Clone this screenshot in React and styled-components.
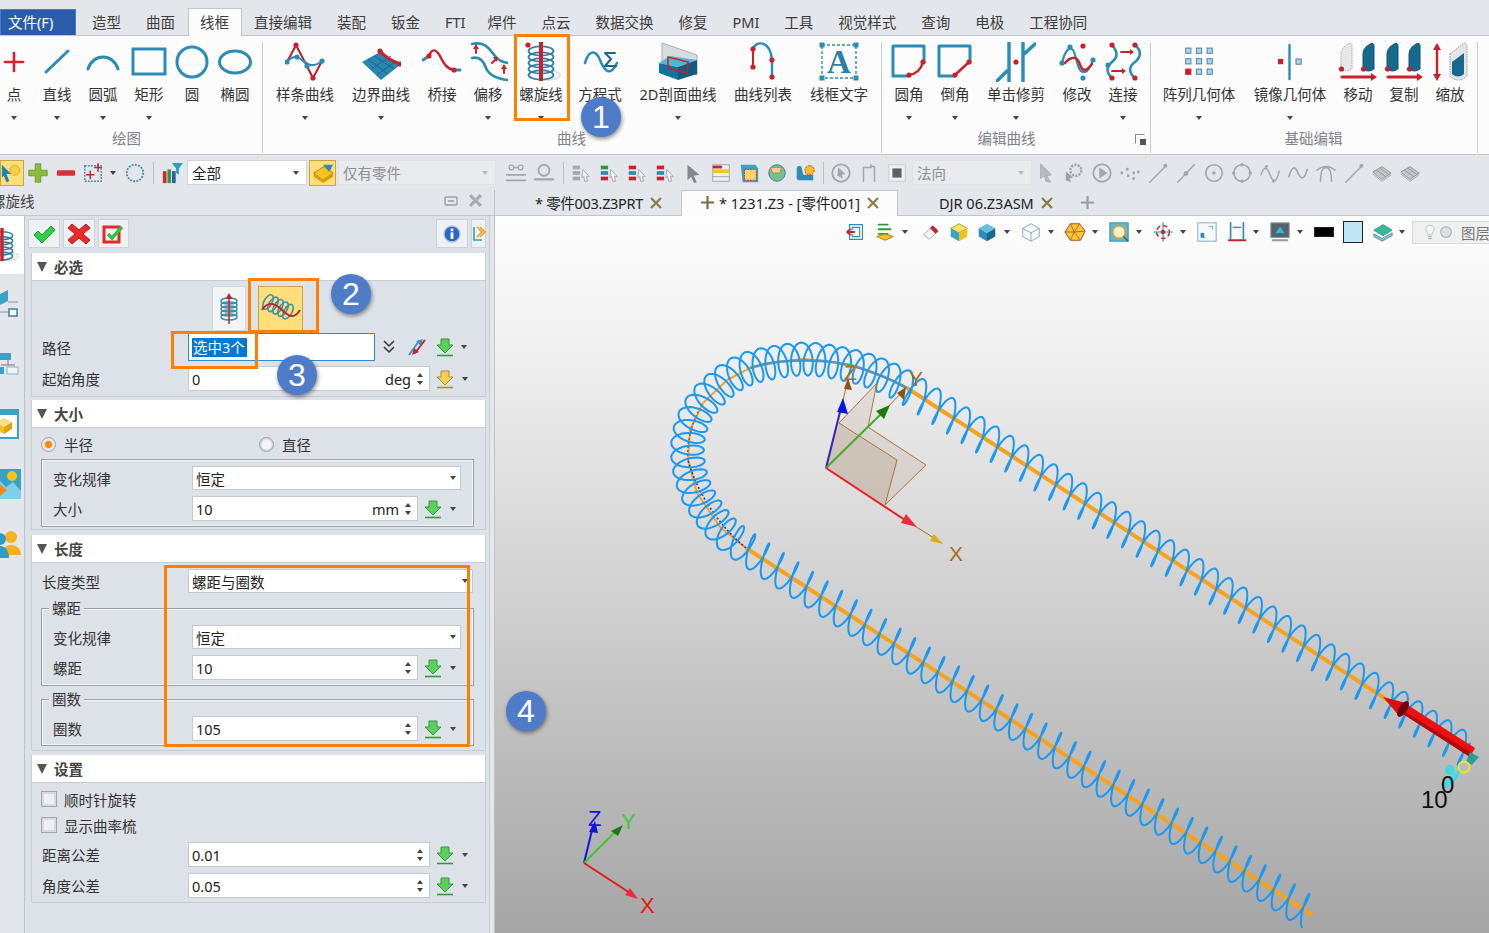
import React from 'react';
import styled, { createGlobalStyle } from 'styled-components';

const B = '#2b8db5';
const BD = '#17688e';
const R = '#c9202b';
const GR = '#a3a7ab';

const GlobalStyle = createGlobalStyle`
html, body { margin: 0; padding: 0; background: #e3e6ea; }
* { box-sizing: border-box; }
body { font-family: "Noto Sans", "Noto Sans CJK SC", sans-serif; font-size: 14.5px; color: #333; }
`

const Page = styled.div`
position: relative;
display: flex;
flex-direction: column;
width: 1489px;
height: 933px;
overflow: hidden;
background: #e3e6ea;
`

/* menu */
const MenuBar = styled.div`
display: flex;
align-items: flex-end;
height: 36px;
flex: none;
border-bottom: 1px solid #c2c6ca;
`
const FileButton = styled.div`
width: 76px;
height: 26px;
padding-left: 7px;
line-height: 25px;
color: #fff;
background: #2a5cab;
border: 1px solid #3f7fd0;
border-bottom: 0;
`
const MenuTab = styled.div`
height: 28px;
padding: 0 11.5px;
line-height: 26px;
white-space: nowrap;
margin-left: ${p => p.$first ? '3.5px' : '0'};
margin-right: ${p => p.$tight ? '-3px' : '0'};
color: #3c3c3c;
background: ${p => p.$active ? '#fcfcfc' : 'transparent'};
border: 1px solid ${p => p.$active ? '#c2c6ca' : 'transparent'};
border-bottom: 0;
margin-bottom: -1px;
position: relative;
`

/* ribbon */
const Ribbon = styled.div`
display: flex;
flex: none;
height: 119px;
background: #fcfcfc;
border-bottom: 1px solid #c2c6ca;
`
const Group = styled.div`
flex: none;
display: flex;
flex-direction: column;
width: ${p => p.$w}px;
margin-left: ${p => p.$ml || 0}px;
padding-left: ${p => p.$pl || 0}px;
position: relative;
&::after {
  content: '';
  position: absolute;
  right: 0;
  top: 6px;
  bottom: 1px;
  width: 1px;
  background: #c9ccd0;
}
`
const ToolRow = styled.div`
display: flex;
height: 92px;
`
const Caption = styled.div`
height: 26px;
line-height: 20px;
text-align: center;
color: #7d8288;
margin-left: ${p => p.$ml || 0}px;
`
const Launcher = styled.span`
position: absolute;
right: 6px;
top: 98px;
width: 10px;
height: 10px;
border: 1px solid #888;
border-right-color: transparent;
border-bottom-color: transparent;
&::after {
  content: '';
  position: absolute;
  right: -2px;
  bottom: -2px;
  width: 6px;
  height: 6px;
  background: #555;
}
`
const ToolBox = styled.div`
flex: none;
width: ${p => p.$w}px;
display: flex;
flex-direction: column;
align-items: center;
padding-top: 6px;
`
const ToolLabel = styled.div`
height: 24px;
line-height: 24px;
white-space: nowrap;
color: #333;
`
const Drop = styled.span`
flex: none;
display: block;
width: 0;
height: 0;
border-left: 3.5px solid transparent;
border-right: 3.5px solid transparent;
border-top: 4px solid ${p => p.$c || '#444'};
margin-left: ${p => p.$ml || 0}px;
margin-top: ${p => p.$mt || 0}px;
`
const Svg = styled.svg`
display: block;
flex: none;
width: ${p => p.$s || 24}px;
height: ${p => p.$s || 24}px;
margin-left: ${p => p.$ml || 0}px;
`

const L = ({ d, c = B, w = 3, ...r }) => <path d={d} fill="none" stroke={c} strokeWidth={w} strokeLinecap="round" strokeLinejoin="round" {...r} />;
const Dot = ({ x, y, r = 2.6, c = R }) => <circle cx={x} cy={y} r={r} fill={c} />;
const Cyl = ({ x, ghost, top = 1 }) => (
  <path d={`M${x} ${top + 11}Q${x} ${top + 7} ${x + 3} ${top + 4}L${x + 7} ${top + 1}Q${x + 11} ${top - 1} ${x + 11} ${top + 3}V${top + 26}Q${x + 5.5} ${top + 30} ${x} ${top + 26}Z`}
    fill={ghost ? '#e6e7e8' : BD} stroke={ghost ? '#aaa' : '#0f5576'} strokeDasharray={ghost ? '1.5 1' : ''} />
);

const ribbonIcons = {
  point: <L d="M5 20H23M14 11V29" c="#d5202c" w="2.6" transform="translate(6 0)" />,
  line: <L d="M9 30L31 9" w="3" />,
  arc: <L d="M5 27C10 11 30 11 35 27" w="3" />,
  rect: <rect x="4" y="7" width="32" height="25" fill="none" stroke={B} strokeWidth="3" />,
  circle: <circle cx="20" cy="20" r="15" fill="none" stroke={B} strokeWidth="3" />,
  ellipse: <ellipse cx="20" cy="20" rx="15.5" ry="11" fill="none" stroke={B} strokeWidth="3" />,
  spline: <>
    <L d="M2 20L11 3L28 36L37 19" c="#b5202b" w="2" />
    <L d="M2 20C6 15 10 14 14 16C20 20 26 28 37 19" w="2" />
    <Dot x="11" y="3" /><Dot x="28" y="36" />
    <Dot x="12" y="15" c={B} /><Dot x="2" y="20" c={B} /><Dot x="22" y="24" c={B} /><Dot x="37" y="19" c={B} />
  </>,
  boundary: <>
    <path d="M1 20L19 10L39 23L20 38Z" fill="#2a86ad" />
    <path d="M7 17L27 32M13 14L33 27M10 27L30 14M16 33L34 20" stroke="#17688e" strokeWidth="1" fill="none" />
    <L d="M19 9C24 15 31 19 39 22" c={R} /><Dot x="19" y="9" /><Dot x="39" y="22" />
  </>,
  bridge: <>
    <L d="M1 18L7 14M32 28H38" />
    <L d="M7 14C10 6 14 7 18 14C22 22 25 27 32 28" c={R} w="2.4" />
    <Dot x="7" y="14" /><Dot x="32" y="28" />
  </>,
  offset: <>
    <L d="M4 2C18 -1 22 8 27 14C30 18 34 20 40 21" w="2.6" />
    <L d="M4 16C12 14 16 20 18 26C21 33 30 37 40 38" w="2.6" />
    <L d="M8 11V6M24 21L28 17M36 31V26" c={R} w="2" />
    <path d="M5 7L8 2L11 7ZM25 15L30 15L29 20ZM33 27L36 22L39 27Z" fill={R} />
  </>,
  helix: <>
    <ellipse cx="24" cy="33" rx="15" ry="5" fill="none" stroke="#d8dbde" strokeWidth="1.5" />
    {[9, 15, 21, 27, 33].map(y => <ellipse key={y} cx="20" cy={y} rx="12.5" ry="4.6" fill="none" stroke={y % 2 ? '#2f7ea8' : BD} strokeWidth="1.8" />)}
    <rect x="18" y="0" width="4" height="39" fill={R} /><Dot x="7" y="3" />
  </>,
  equation: <>
    <L d="M5 21C9 7 16 8 20 18S30 36 37 21" w="2.6" />
    <L d="M35 11H25L31 17L25 24H36" c={BD} w="2" />
  </>,
  section: <>
    <path d="M4 1L39 13V33L4 21Z" fill="#d9dcdf" stroke="#a8adb2" />
    <path d="M1 21L20 25V38L1 31Z" fill="#13739c" />
    <path d="M1 21L12 14L39 18L20 25Z" fill="#4fb7d8" />
    <path d="M20 25L39 18V32L20 38Z" fill="#0f5c80" />
    <path d="M10 15L30 20L29 31L10 26Z" fill="none" stroke={R} strokeWidth="1.6" />
  </>,
  curves: <>
    <L d="M10 7V25" c={R} w="2" />
    <L d="M10 7C12 -1 27 -3 29 18V35" w="2.4" />
    <Dot x="10" y="7" /><Dot x="10" y="25" /><Dot x="29" y="18" /><Dot x="29" y="35" />
  </>,
  wiretext: <>
    <rect x="3" y="3" width="34" height="33" fill="none" stroke={B} strokeWidth="1.4" strokeDasharray="3 2" />
    {[[3, 3], [37, 3], [3, 36], [37, 36]].map(([x, y]) => <rect key={x + '' + y} x={x - 2.5} y={y - 2.5} width="5" height="5" fill={B} />)}
    <text x="20" y="31" textAnchor="middle" fontFamily="Liberation Serif, serif" fontWeight="700" fontSize="33" fill="#2c7fa6">A</text>
  </>,
  fillet: <>
    <L d="M35 20V4H4V34H19" w="3" />
    <L d="M20 33C28 32 32 27 34 20" c={R} w="2.4" />
    <Dot x="20" y="33" /><Dot x="34" y="20" />
  </>,
  chamfer: <>
    <L d="M35 20V4H4V34H19" w="3" />
    <L d="M20 33L34 20" c={R} w="2.4" />
    <Dot x="20" y="33" /><Dot x="34" y="20" />
  </>,
  trim: <>
    <L d="M1 39L11 29M13 1V39M27 39V1M27 13L39 2" w="3.4" />
    <Dot x="20" y="20" />
  </>,
  modify: <>
    <L d="M5 21C8 9 12 4 16 8C20 14 20 32 28 30C32 29 34 24 36 18" w="2.2" />
    <L d="M8 21C12 16 19 13 22 20C24 26 27 33 35 22" c={R} w="2.4" />
    <Dot x="5" y="21" c={B} /><Dot x="13" y="5" c={B} /><Dot x="26" y="36" c={B} /><Dot x="36" y="18" c={B} /><Dot x="26" y="4" />
  </>,
  connect: <>
    <L d="M9 3C15 10 15 15 9 20C3 25 3 30 9 36" w="2.6" />
    <L d="M32 3C39 9 38 15 32 20C25 25 26 31 32 36" w="2.6" />
    <L d="M18 10H28M9 29H20" c={R} w="1.8" />
    <path d="M27 7L31 10L27 13ZM19 26L23 29L19 32Z" fill={R} />
    <Dot x="9" y="3" /><Dot x="32" y="3" /><Dot x="9" y="36" /><Dot x="32" y="36" /><Dot x="5" y="23" c={B} />
  </>,
  pattern: <>
    {[8.7, 19.3, 29.7].flatMap(y => [9.3, 20, 30.7].map(x => (
      <rect key={x + '-' + y} x={x - 2.6} y={y - 2.6} width="5.2" height="5.2"
        fill={x === 9.3 && y === 29.7 ? R : '#a9d6ec'} stroke={x === 9.3 && y === 29.7 ? R : '#51819c'} />
    )))}
  </>,
  mirror: <>
    <L d="M19.5 3V37" w="2.4" />
    <rect x="8" y="17" width="5.2" height="5.2" fill={R} />
    <rect x="26" y="17" width="5.2" height="5.2" fill="#a9d6ec" stroke="#51819c" />
  </>,
  move: <>
    <Cyl x={3} ghost /><Cyl x={25} /><Dot x="3.5" y="27" /><Dot x="25.5" y="27" />
    <L d="M4 35H34" c={R} w="3" /><path d="M33 31L39 35L33 39Z" fill={R} />
  </>,
  copy: <>
    <Cyl x={3} /><Cyl x={25} /><Dot x="3.5" y="27" /><Dot x="25.5" y="27" />
    <L d="M4 35H34" c={R} w="3" /><path d="M33 31L39 35L33 39Z" fill={R} />
  </>,
  scale: <>
    <L d="M7 6V34" c={R} w="2.4" />
    <path d="M3 8L7 1L11 8ZM3 32L7 39L11 32Z" fill={R} />
    <path d="M20 12L34 1Q37 1 37 5V34Q28 42 20 34Z" fill="#e4e5e6" stroke="#999" strokeDasharray="1.5 1" />
    <path d="M22 20L34 11V32Q28 37 22 32Z" fill={BD} />
  </>,
};

function Tool({ w, icon, label, drop }) {
  return (
    <ToolBox $w={w}>
      <Svg $s={40} viewBox="0 0 40 40">{ribbonIcons[icon]}</Svg>
      <ToolLabel>{label}</ToolLabel>
      {drop && <Drop $mt={10} />}
    </ToolBox>
  );
}

/* quick bar */
const QuickBar = styled.div`
display: flex;
align-items: center;
height: 35px;
flex: none;
`
const QBtn = styled.div`
flex: none;
display: flex;
align-items: center;
justify-content: center;
width: ${p => p.$w || 28}px;
height: 26px;
margin-left: ${p => p.$ml || 0}px;
background: ${p => p.$on ? '#ffdf7a' : 'transparent'};
border: 1px solid ${p => p.$on ? '#c9a243' : 'transparent'};
overflow: hidden;
`
const Sep = styled.div`
flex: none;
width: 1px;
height: 22px;
background: #bcc0c4;
margin: 0 ${p => p.$r || 4}px 0 ${p => p.$l || 4}px;
`
const Combo = styled.div`
flex: none;
display: flex;
align-items: center;
justify-content: space-between;
width: ${p => p.$w}px;
height: 25px;
margin-left: ${p => p.$ml || 0}px;
padding: 0 7px 0 4px;
color: ${p => p.$off ? '#8b8f94' : '#222'};
background: ${p => p.$off ? '#e9ebed' : '#fff'};
border: 1px solid ${p => p.$off ? '#dfe1e4' : '#d2d5d8'};
`

const quickIcons = {
  select: <>
    <circle cx="15" cy="9" r="5.5" fill="#f4d03f" stroke="#d8a82a" />
    <path d="M1 3L11 13L6 13L9 21L6 22L3 15L1 17Z" fill="#1b84b8" />
  </>,
  plus: <path d="M9 2H15V9H22V15H15V22H9V15H2V9H9Z" fill="#8bbd3c" stroke="#6c9a2a" />,
  minus: <rect x="2" y="9" width="20" height="6" rx="1.5" fill="#d5323a" />,
  selrect: <>
    <rect x="3" y="4" width="18" height="17" fill="none" stroke="#3d8aa5" strokeWidth="1.6" strokeDasharray="2 1.4" />
    <L d="M5 14H13M9 10V18M14 6H21M17.5 2V10" c={R} w="1.6" />
  </>,
  selcircle: <circle cx="12" cy="12" r="9" fill="none" stroke="#3d8aa5" strokeWidth="2" strokeDasharray="2 1.5" />,
  filter: <>
    <rect x="2" y="10" width="4" height="13" fill="#cf2a2a" />
    <rect x="7" y="8" width="4" height="15" fill="#2f9a3c" />
    <rect x="12" y="10" width="4" height="13" fill="#2a5cab" />
    <path d="M12 1H24L19.5 7V14L16.5 12V7Z" fill="#2b9ec6" />
  </>,
  part: <>
    <path d="M2 12L13 5L23 12L12 20Z" fill="#f6c31f" stroke="#a97c0d" />
    <path d="M2 12V16L12 23L23 16V12L12 20Z" fill="#d99e10" />
    <path d="M12 3H23L19 11Z" fill="#2b8db5" />
  </>,
  link: <>
    <L d="M2 14H22M2 20H22" c={GR} w="2" />
    <circle cx="7" cy="6" r="2.6" fill="none" stroke={GR} strokeWidth="1.4" /><circle cx="17" cy="6" r="2.6" fill="none" stroke={GR} strokeWidth="1.4" /><L d="M9.6 6H14.4" c={GR} w="1.4" />
  </>,
  clock: <><circle cx="12" cy="9" r="6" fill="none" stroke={GR} strokeWidth="2" /><L d="M2 19H22" c={GR} w="2.4" /></>,
  stack: <>
    <rect x="3" y="4" width="8" height="4" fill="#a5a9ad" /><rect x="3" y="10" width="8" height="4" fill={GR} /><rect x="3" y="16" width="8" height="4" fill="#a5a9ad" />
    <path d="M14 8L21 16L18 16L19 21L16 21L15 16L13 17Z" fill="#eef0f2" stroke={GR} />
  </>,
  stackc: <>
    <rect x="3" y="4" width="8" height="4" fill="#2f9a3c" /><rect x="3" y="10" width="8" height="4" fill="#2b8db5" /><rect x="3" y="16" width="8" height="4" fill="#c9202b" />
    <path d="M14 8L21 16L18 16L19 21L16 21L15 16L13 17Z" fill="#eef0f2" stroke={GR} />
  </>,
  stackr: <>
    <rect x="3" y="4" width="8" height="4" fill="#c9202b" /><rect x="3" y="10" width="8" height="4" fill="#2b8db5" /><rect x="3" y="16" width="8" height="4" fill="#c9202b" />
    <path d="M14 8L21 16L18 16L19 21L16 21L15 16L13 17Z" fill="#eef0f2" stroke={GR} />
  </>,
  arrow: <path d="M6 3L19 14L13 15L16 22L13 23L10 16L6 20Z" fill="#84888c" />,
  list: <>
    <rect x="3" y="3" width="18" height="18" fill="#eceff1" stroke="#9aa0a6" />
    <path d="M3 8H21V12H3Z" fill="#f4c430" /><rect x="3" y="4" width="10" height="3" fill="#c9202b" /><L d="M3 16H21" c="#9aa0a6" w="1" />
  </>,
  cubeRed: <>
    <path d="M3 3H19L22 7V22H5Z" fill="#3aa2c9" />
    <rect x="7" y="8" width="13" height="12" fill="#f6d66c" stroke={R} strokeDasharray="2 1" />
  </>,
  globe: <>
    <circle cx="12" cy="12" r="9" fill="#76c08d" stroke="#3a7d9b" />
    <path d="M5 6H17L15 12H7Z" fill="#f5c9a0" stroke="#b4753b" strokeWidth=".7" />
  </>,
  gear: <>
    <path d="M3 8Q3 3 8 5L10 14H21V20H6Q2 20 3 14Z" fill="#2b8db5" />
    <circle cx="17" cy="9" r="5" fill="#f6c31f" stroke={R} strokeDasharray="2 1" />
  </>,
  dial: <><circle cx="12" cy="12" r="9.5" fill="none" stroke={GR} strokeWidth="2" /><path d="M9 6L17 13L13 14L14 18L8 15Z" fill={GR} /></>,
  bracket: <L d="M6 21V6H14V3M18 6V21M14 5H18" c={GR} w="1.6" />,
  sq: <><rect x="3" y="3" width="18" height="18" fill="#eef0f1" stroke="#c8ccd0" /><rect x="7" y="7" width="10" height="10" fill="#5f6265" /></>,
  pick: <path d="M6 2L18 14L13 15L17 22L12 21L10 15L6 18Z" fill="#b7bbbf" stroke="#999" strokeWidth=".6" />,
  gearg: <><circle cx="14" cy="9" r="6" fill="none" stroke={GR} strokeWidth="2.6" strokeDasharray="2.5 1.2" /><path d="M3 10L11 17L7 18L9 22L3 20Z" fill="#9fa3a7" /></>,
  play: <><circle cx="12" cy="12" r="9.5" fill="none" stroke={GR} strokeWidth="2" /><path d="M9 6L18 12L9 18Z" fill={GR} /></>,
  pts: <g fill={GR}><circle cx="3" cy="12" r="1.6" /><circle cx="9" cy="8" r="1.6" /><circle cx="10" cy="15" r="1.6" /><circle cx="16" cy="12" r="1.6" /><circle cx="16" cy="18" r="1.6" /><circle cx="21" cy="11" r="1.6" /></g>,
  lineg: <><L d="M3 22L20 5" c={GR} w="1.6" /><circle cx="20" cy="4" r="2.2" fill={GR} /></>,
  lineh: <><L d="M3 22L21 3" c={GR} w="1.6" /><circle cx="12" cy="12.5" r="2.6" fill={GR} /></>,
  circd: <><circle cx="12" cy="12" r="9" fill="none" stroke={GR} strokeWidth="1.8" /><circle cx="12" cy="12" r="2" fill={GR} /></>,
  circp: <><circle cx="12" cy="12" r="9" fill="none" stroke={GR} strokeWidth="1.8" />{[[12, 3], [12, 21], [3, 12], [21, 12]].map(([x, y]) => <circle key={x + '_' + y} cx={x} cy={y} r="1.8" fill={GR} />)}</>,
  wave: <><L d="M2 14C6 3 9 6 12 14S19 24 22 10" c={GR} w="1.6" /><circle cx="8" cy="5" r="1.6" fill={GR} /><circle cx="16" cy="21" r="1.6" fill={GR} /></>,
  wave2: <L d="M2 16C6 3 9 5 12 12S19 20 22 8" c={GR} w="1.8" />,
  arch: <L d="M2 9Q12 1 22 9M6 21C6 10 9 6 12 6S18 10 18 21" c={GR} w="1.6" />,
  sheet: <><path d="M2 11L12 5L22 12L12 19Z" fill="#c4c7ca" stroke="#8f9397" /><L d="M6 9L16 16M10 7L20 14" c="#8f9397" w="1" /><path d="M2 13L12 21L22 14" fill="none" stroke="#a0a4a8" /></>,
};

const Quick = ({ k, w, on, ml, s = 22 }) => (
  <QBtn $w={w} $on={on} $ml={ml}><Svg $s={s} viewBox="0 0 24 24">{quickIcons[k]}</Svg></QBtn>
);

/* workspace */
const Work = styled.div`
display: flex;
flex: 1;
min-height: 0;
`
const Side = styled.div`
flex: none;
display: flex;
flex-direction: column;
width: 495px;
border-right: 1px solid #bfc3c8;
`
const SideHead = styled.div`
display: flex;
align-items: center;
height: 26px;
flex: none;
padding: 0 7px 4px 0;
border-bottom: 1px solid #c2c6ca;
`
const SideTitle = styled.div`
flex: 1;
margin-left: -9px;
white-space: nowrap;
color: #444;
`
const HeadIcon = styled.span`
width: 24px;
display: flex;
justify-content: center;
`
const SideBody = styled.div`
display: flex;
flex: 1;
min-height: 0;
`
const Strip = styled.div`
flex: none;
width: 25px;
display: flex;
flex-direction: column;
border-right: 1px solid #bfc3c8;
overflow: hidden;
`
const StripCell = styled.div`
flex: none;
height: ${p => p.$h}px;
display: flex;
align-items: center;
background: ${p => p.$on ? '#fff' : 'transparent'};
overflow: hidden;
`
const FormArea = styled.div`
width: 465px;
flex: none;
padding: 3px 4px 0 6px;
background: #dde1e8;
border-right: 1px solid #c8ccd1;
position: relative;
`
const ActionRow = styled.div`
display: flex;
height: 29px;
margin: 0 -1px 5px -3px;
`
const SqButton = styled.div`
display: flex;
align-items: center;
justify-content: center;
width: ${p => p.$w || 32}px;
height: 29px;
margin-left: ${p => p.$ml || 0}px;
background: #eff1f3;
border: 1px solid #cfd2d6;
`
const Section = styled.div`
width: 455px;
height: ${p => p.$h}px;
margin-bottom: ${p => p.$mb || 0}px;
border: 1px solid #c7ccd2;
border-top: 0;
`
const SectionHead = styled.div`
display: flex;
align-items: center;
height: 28px;
padding-left: 5px;
background: #fff;
border-bottom: 1px solid #c7ccd2;
font-weight: 700;
color: #444;
`
const Tri = styled.span`
width: 0;
height: 0;
margin-right: 7px;
border-left: 5px solid transparent;
border-right: 5px solid transparent;
border-top: 10px solid #555;
`
const ModeRow = styled.div`
display: flex;
justify-content: flex-start;
height: 52px;
padding: 5px 0 0 180px;
`
const ModeBtn = styled.div`
display: flex;
align-items: center;
justify-content: center;
width: ${p => p.$w}px;
height: 45px;
margin-left: ${p => p.$ml || 0}px;
background: ${p => p.$on ? '#ffdf7a' : '#f3f4f6'};
border: 1px solid ${p => p.$on ? '#c9a243' : '#d3d6da'};
`
const FormRow = styled.div`
display: flex;
align-items: center;
height: ${p => p.$h || 25}px;
margin-top: ${p => p.$mt || 0}px;
padding-left: ${p => p.$pl || 10}px;
`
const RowLabel = styled.div`
flex: none;
width: ${p => p.$w || 146}px;
white-space: nowrap;
color: #333;
`
const Input = styled.div`
flex: none;
display: flex;
align-items: center;
width: ${p => p.$w}px;
height: ${p => p.$h || 25}px;
padding: 0 4px 0 3px;
background: #fff;
border: 1px solid ${p => p.$focus ? '#2d8ad8' : '#c5c9ce'};
color: #222;
`
const Grow = styled.span`
flex: 1;
`
const Unit = styled.span`
margin-right: 6px;
`
const Spin = styled.span`
display: flex;
flex-direction: column;
gap: 4px;
width: 8px;
&::before, &::after {
  content: '';
  width: 0;
  height: 0;
  border-left: 3px solid transparent;
  border-right: 3px solid transparent;
}
&::before { border-bottom: 4px solid #444; }
&::after { border-top: 4px solid #444; }
`
const Selected = styled.span`
padding: 0 2px 0 1px;
line-height: 19px;
color: #fff;
background: #0078d7;
`
const RadioRow = styled.div`
display: flex;
align-items: center;
height: 31px;
padding: 3px 0 1px 9px;
`
const Radio = styled.span`
flex: none;
display: inline-block;
width: 15px;
height: 15px;
border-radius: 50%;
border: 1px solid #9ea2a7;
background: ${p => p.$on ? 'radial-gradient(circle, #f08a1c 0 3px, #ffd9a8 4px, #e6e8eb 5px)' : 'radial-gradient(circle, #f5f6f7 0 4px, #d5d8dc 6px)'};
margin-right: 8px;
`
const RadioText = styled.span`
width: ${p => p.$w}px;
`
const FieldBox = styled.div`
position: relative;
width: 433px;
height: ${p => p.$h}px;
margin: ${p => p.$mt || 0}px 0 0 9px;
padding-top: ${p => p.$pt}px;
border: 1px solid #9a9ea3;
box-shadow: inset 0 0 0 1px #f4f5f7;
`
const Legend = styled.span`
position: absolute;
left: 7px;
top: -10px;
padding: 0 3px;
line-height: 19px;
background: #dde1e8;
`
const CheckRow = styled.div`
display: flex;
align-items: center;
height: 26px;
padding-left: 9px;
margin-top: ${p => p.$mt || 0}px;
`
const Check = styled.span`
width: 16px;
height: 16px;
margin-right: 7px;
background: #eef0f3;
border: 1px solid #a2a6ab;
box-shadow: inset 0 0 0 2px #d7dbe1;
`
const ActionIcon = styled.span`
flex: none;
display: flex;
justify-content: center;
width: ${p => p.$w || 22}px;
margin-left: ${p => p.$ml || 0}px;
`

const DownIcon = ({ gold }) => (
  <Svg $s={20} viewBox="0 0 20 20">
    <path d="M6 2H14V8H18L10 16L2 8H6Z" fill={gold ? '#f2cf55' : '#5cd05c'} stroke={gold ? '#a98f2a' : '#2f9a3c'} />
    <path d="M2 18.5H18" stroke={gold ? '#a98f2a' : '#2f9a3c'} strokeWidth="1.6" />
  </Svg>
);
const ValueActions = ({ gold, ml = 4, gap = 6 }) => (
  <>
    <ActionIcon $ml={ml}><DownIcon gold={gold} /></ActionIcon>
    <Drop $ml={gap} />
  </>
);

/* main view */
const Main = styled.div`
flex: 1;
display: flex;
flex-direction: column;
min-width: 0;
`
const TabBar = styled.div`
display: flex;
align-items: center;
height: 26px;
flex: none;
padding-left: 39px;
border-bottom: 1px solid #c2c6ca;
white-space: nowrap;
`
const DocTab = styled.div`
display: flex;
align-items: center;
height: 27px;
width: ${p => p.$w}px;
padding-left: ${p => p.$pl || 0}px;
padding-bottom: 2px;
margin-bottom: -1px;
margin-left: ${p => p.$ml || 0}px;
background: ${p => p.$on ? '#fcfcfc' : 'transparent'};
border: 1px solid ${p => p.$on ? '#c2c6ca' : 'transparent'};
border-bottom: 0;
color: #222;
`
const TabText = styled.span`
margin-left: ${p => p.$ml || 0}px;
letter-spacing: ${p => p.$ls || 0}px;
`
const TabClose = styled.svg`
flex: none;
width: 12px;
height: 12px;
margin-left: ${p => p.$ml || 7}px;
`
const View = styled.div`
position: relative;
flex: 1;
min-height: 0;
overflow: hidden;
background: linear-gradient(#fdfdfd, #f4f4f4 14%, #a6a6a6);
`
const Canvas = styled.svg`
position: absolute;
left: 0;
top: 0;
width: 994px;
height: 717px;
`
const ViewBar = styled.div`
position: relative;
display: flex;
align-items: center;
height: 32px;
padding-left: 350px;
`
const VIcon = styled.span`
flex: none;
display: block;
width: 22px;
height: 22px;
margin-left: ${p => p.$ml || 0}px;
`
const VDrop = styled(Drop)`
margin-right: 2.5px;
margin-left: ${p => (p.$ml || 0) + 1.5}px;
`
const Swatch = styled.span`
flex: none;
width: 20px;
height: ${p => p.$h}px;
margin-left: 9px;
background: ${p => p.$c};
border: 1px solid #222;
`
const LayerBox = styled.div`
flex: none;
display: flex;
align-items: center;
width: 90px;
height: 23px;
margin-left: 5px;
padding-left: 9px;
color: #777;
background: #eef0f1;
border: 1px solid #d6d8da;
white-space: nowrap;
`
const LayerText = styled.span`
margin-left: 7px;
`

/* annotations lying over the ui */
const Mark = styled.div`
position: absolute;
left: ${p => p.$x}px;
top: ${p => p.$y}px;
width: ${p => p.$w}px;
height: ${p => p.$h}px;
border: 3px solid #ff8000;
pointer-events: none;
`
const Badge = styled.div`
position: absolute;
left: ${p => p.$x - 20}px;
top: ${p => p.$y - 20}px;
width: 40px;
height: 40px;
border-radius: 50%;
text-align: center;
font: 32px/40px "Liberation Sans", sans-serif;
color: #fff;
background: #4f7cc9;
box-shadow: 1px 2px 4px rgba(0, 0, 0, .45);
`

/* 3d scene: helix around a stadium-shaped path, page coordinates */
const spine = [
  [1312, 915], [746, 548], [720, 527], [697, 493], [688, 460], [690, 430], [703, 403], [727, 380], [750, 368],
  [777, 362], [803, 359], [827, 361], [860, 368], [887, 378], [907, 388], [1472, 755],
];

// keeps the far ends of the long straights from pulling the spline out of shape
const near = (from, to, seg) => {
  const d = Math.hypot(to[0] - from[0], to[1] - from[1]);
  if (d <= seg * 2) return to;
  return [from[0] + (to[0] - from[0]) / d * seg, from[1] + (to[1] - from[1]) / d * seg];
};

function sampleSpine() {
  const out = [];
  for (let i = 0; i < spine.length - 1; i++) {
    const p1 = spine[i], p2 = spine[i + 1];
    const seg = Math.hypot(p2[0] - p1[0], p2[1] - p1[1]);
    const p0 = near(p1, spine[i - 1] || p1, seg), p3 = near(p2, spine[i + 2] || p2, seg);
    const long = seg > 100;
    const n = Math.ceil(seg / 0.5);
    for (let k = 0; k < n; k++) {
      const t = k / n;
      if (long) {
        out.push([p1[0] + (p2[0] - p1[0]) * t, p1[1] + (p2[1] - p1[1]) * t]);
      } else {
        const f = j => 0.5 * (2 * p1[j] + (p2[j] - p0[j]) * t + (2 * p0[j] - 5 * p1[j] + 4 * p2[j] - p3[j]) * t * t + (3 * p1[j] - p0[j] - 3 * p2[j] + p3[j]) * t * t * t);
        out.push([f(0), f(1)]);
      }
    }
  }
  out.push(spine[spine.length - 1]);
  return out;
}

const clamp01 = v => Math.max(0, Math.min(1, v));

function helixPath() {
  const pts = sampleSpine();
  const s0 = Math.hypot(spine[1][0] - spine[0][0], spine[1][1] - spine[0][1]);
  const last = spine.length - 1;
  const tail = Math.hypot(spine[last][0] - spine[last - 1][0], spine[last][1] - spine[last - 1][1]);
  let total = 0;
  for (let i = 1; i < pts.length; i++) total += Math.hypot(pts[i][0] - pts[i - 1][0], pts[i][1] - pts[i - 1][1]);
  const s1 = total - tail;

  let theta = 0;
  let s = 0;
  let d = '';
  for (let i = 6; i < pts.length - 6; i += 1) {
    const [x, y] = pts[i];
    const dx = pts[i + 6][0] - pts[i - 6][0], dy = pts[i + 6][1] - pts[i - 6][1];
    const len = Math.hypot(dx, dy) || 1;
    const tx = dx / len, ty = dy / len;
    const step = Math.hypot(pts[i][0] - pts[i - 1][0], pts[i][1] - pts[i - 1][1]);
    s += step;
    const w = clamp01((s - s0 + 10) / 40) * clamp01((s1 - s + 10) / 40);
    const pitch = 17.4 - 4.4 * w;
    theta += (2 * Math.PI * step) / pitch;
    const a = 16.5;
    const b = 4 + 3.5 * w;
    const lean = -2.6 * (1 - w);
    const c = Math.cos(theta), n = Math.sin(theta);
    const px = x + ty * a * c + tx * (b * n + lean * c);
    const py = y - tx * a * c + ty * (b * n + lean * c);
    d += (d ? 'L' : 'M') + px.toFixed(1) + ' ' + py.toFixed(1);
  }
  return d;
}
const HELIX = helixPath();
const toD = list => list.map((p, i) => (i ? 'L' : 'M') + p[0] + ' ' + p[1]).join('');

const Scene = () => (
  <Canvas viewBox="495 216 994 717">
    <path d={toD([spine[0], spine[1]])} fill="none" stroke="#f6a21c" strokeWidth="4" />
    <path d={toD([spine[14], spine[15]])} fill="none" stroke="#f6a21c" strokeWidth="4" />
    <path d="M746 548L720 527L697 493L688 460L690 430L703 403L727 380L750 368L777 362L803 359L827 361L860 368L887 378L907 388" fill="none" stroke="#f6a21c" strokeWidth="2" />
    <path d="M746 548C720 527 697 493 688 460" fill="none" stroke="#2a2fb0" strokeWidth="1.6" strokeDasharray="2 2" />
    <path d="M688 460C686 440 695 415 703 403" fill="none" stroke="#7a6e4a" strokeWidth="1.6" strokeDasharray="2 2" />
    <path d="M750 368C780 358 830 358 860 368S895 382 907 388" fill="none" stroke="#5e93ad" strokeWidth="2.6" />
    <path d={HELIX} fill="none" stroke="#1a98f2" strokeWidth="2" strokeLinejoin="round" />

    {/* triad */}
    <polygon points="826,468 839,423 897,460 885,505" fill="#a5835f" fillOpacity=".2" />
    <polygon points="826,468 868,427 926,465 885,505" fill="#a5835f" fillOpacity=".14" />
    <polygon points="839,423 877,383 868,427 826,468" fill="#a5835f" fillOpacity=".14" />
    <path d="M839 423L877 383L868 427L926 465L885 505L897 460L839 423" fill="none" stroke="#a8763a" strokeWidth="1" />
    <path d="M826 468L841 408" stroke="#3a22b8" strokeWidth="2" />
    <path d="M826 468L883 412" stroke="#4aa82c" strokeWidth="2" />
    <path d="M826 468L905 520" stroke="#ee1c1c" strokeWidth="2" />
    <path d="M841 408L848 380M883 412L905 389M905 520L942 543" stroke="#a3702c" strokeWidth="1" />
    <path d="M843 398L848 414L837 412Z" fill="#0a14e0" />
    <path d="M890 405L884 419L876 411Z" fill="#1f7a14" />
    <path d="M917 527L901 523L906 514Z" fill="#ee2a3a" />
    <path d="M848 378L852 390L844 389Z" fill="#8a5510" />
    <path d="M906 387L904 400L897 393Z" fill="#8a5510" />
    <path d="M943 544L930 541L934 534Z" fill="#e0a81c" />
    <g fontFamily="Liberation Sans, sans-serif" fontSize="21" fill="#a86e14">
      <text x="844" y="380">Z</text>
      <text x="909" y="386">Y</text>
      <text x="949" y="561">X</text>
    </g>

    {/* end handle */}
    <polygon points="1405.7,703.8 1475,748 1470,757 1400.3,712.2" fill="#ee1010" />
    <polygon points="1402,710 1472,753 1470,757 1400.3,712.2" fill="#b00c0c" />
    <polygon points="1383,697 1408,703.5 1399.6,716.5" fill="#d81010" />
    <ellipse cx="1403" cy="709" rx="4" ry="9" transform="rotate(33 1403 709)" fill="#6e0808" />
    <polygon points="1470,752 1479,757 1472,765 1466,762" fill="#2f9c9c" />
    <polygon points="1441,784 1463,767 1456,780 1446,789" fill="#45d8dc" />
    <circle cx="1450" cy="770" r="5" fill="#45d8dc" />
    <circle cx="1464" cy="767" r="5.5" fill="none" stroke="#f2e81c" strokeWidth="1.8" />
    <text x="1441" y="793" fontFamily="Liberation Sans, sans-serif" fontSize="24" fill="#111">0</text>
    <text x="1421" y="808" fontFamily="Liberation Sans, sans-serif" fontSize="24" fill="#111">10</text>

    {/* world triad */}
    <path d="M584 863L593 826" stroke="#1414e8" strokeWidth="2" />
    <path d="M584 863L617 830" stroke="#3ccc2c" strokeWidth="2" />
    <path d="M584 863L630 893" stroke="#ee1414" strokeWidth="2" />
    <path d="M595 821L598 833L589 832Z" fill="#1414d0" />
    <path d="M623 825L618 836L611 831Z" fill="#1f7a14" />
    <path d="M638 899L625 895L630 888Z" fill="#ee2a3a" />
    <g fontFamily="Liberation Sans, sans-serif" fontSize="22">
      <text x="588" y="826" fill="#1414e8">Z</text>
      <text x="621" y="829" fill="#3ccc2c">Y</text>
      <text x="640" y="913" fill="#ee1414">X</text>
    </g>
  </Canvas>
);

const viewIcons = {
  back: <><path d="M5 4H19V20H5V15H8V17H16V7H8V9H5Z" fill="#fff" stroke="#2b8db5" strokeWidth="1.2" /><path d="M2 12H11M2 12L6 9M2 12L6 15" stroke={R} strokeWidth="2" fill="none" /></>,
  tree: <><L d="M5 4H15M5 9H18M5 14H15" c="#2f9a3c" w="2" /><path d="M3 17L12 14L21 17L12 21Z" fill="#f6c31f" stroke="#a97c0d" /></>,
  eraser: <><path d="M4 15L14 5L20 11L10 20Z" fill="#f2f2f2" stroke="#aaa" /><path d="M14 5L20 11L17 14L11 8Z" fill={R} /></>,
  cubeY: <><path d="M3 8L12 3L21 8L12 13Z" fill="#f8e46a" stroke="#b09a20" /><path d="M3 8V17L12 22V13Z" fill="#3aa2c9" /><path d="M21 8V17L12 22V13Z" fill="#f2c21c" /></>,
  cubeB: <><path d="M3 8L12 3L21 8L12 13Z" fill="#63bfe0" /><path d="M3 8V17L12 22V13Z" fill="#2b8db5" /><path d="M21 8V17L12 22V13Z" fill="#17688e" /></>,
  cubeW: <><path d="M3 8L12 3L21 8V17L12 22L3 17Z" fill="#fbfbfb" stroke="#7aa9bf" /><path d="M3 8L12 13L21 8M12 13V22" fill="none" stroke="#7aa9bf" /></>,
  poly: <><path d="M7 3H17L23 11L18 21H7L1 12Z" fill="#f6c93c" stroke="#a9450f" /><path d="M7 3L11 12L1 12M11 12L17 3M11 12L23 11M11 12L7 21M11 12L18 21" stroke="#a9450f" strokeWidth=".8" fill="none" /></>,
  frame: <><rect x="2" y="2" width="20" height="20" fill="#5fb6d8" stroke="#2b8db5" /><circle cx="12" cy="12" r="7" fill="#f4f0c9" stroke="#c9a243" strokeWidth="2" /><path d="M17 17L22 22" stroke="#555" strokeWidth="1.6" /></>,
  target: <><circle cx="12" cy="12" r="7" fill="none" stroke={R} strokeWidth="1.6" strokeDasharray="5 3" /><L d="M2 12H22M12 2V22" c="#2b8db5" w="1.2" /><circle cx="12" cy="12" r="2.4" fill={R} /></>,
  zoomfit: <><rect x="2" y="2" width="20" height="20" fill="#f8f8f8" stroke="#7aa9bf" /><L d="M14 6H18V9M6 15V18H10" c="#8fc3da" w="1.4" /><rect x="5" y="13" width="4" height="5" fill="#2b8db5" /></>,
  dim: <><L d="M5 2V19M19 2V19" w="1.8" /><L d="M8 7H16" c="#2b8db5" w="1.3" /><L d="M3 21H21" c={R} w="2" /></>,
  monitor: <><rect x="2" y="2" width="20" height="16" fill="#53646e" stroke="#8b949a" /><path d="M7 13L12 6L17 13Z" fill="#38b3dd" /><L d="M4 21H20" c="#999" w="2" /></>,
  layers: <><path d="M2 14L11 19L22 13V16L11 22L2 17Z" fill="#8fbfd2" stroke="#5d8ea4" /><path d="M2 10L12 4L22 10L12 16Z" fill="#35b89b" stroke="#2f9a85" /></>,
  bulb: <><path d="M12 2C7 2 5 6 6 9C7 12 9 13 9 16H15C15 13 17 12 18 9C19 6 17 2 12 2Z" fill="#f4f4f4" stroke="#aaa" /><L d="M10 19H14M10 22H14" c="#999" w="1.4" /></>,
  ball: <circle cx="12" cy="12" r="8" fill="#dcdedf" stroke="#aaa" strokeWidth="1.6" />,
};

const V = ({ k, ml }) => (
  <VIcon $ml={ml}><Svg $s={22} viewBox="0 0 24 24">{viewIcons[k]}</Svg></VIcon>
);

const XIcon = ({ ml, c = '#8a7a4c' }) => (
  <TabClose $ml={ml} viewBox="0 0 12 12"><path d="M1 1L11 11M11 1L1 11" stroke={c} strokeWidth="2.2" /></TabClose>
);

const menus = ['造型', '曲面', '线框', '直接编辑', '装配', '钣金', 'FTI', '焊件', '点云', '数据交换', '修复', 'PMI', '工具', '视觉样式', '查询', '电极', '工程协同'];

export default function App() {
  return (
    <Page>
      <GlobalStyle />
      <MenuBar>
        <FileButton>文件(F)</FileButton>
        {menus.map((m, i) => <MenuTab key={m} $first={i === 0} $tight={m === 'FTI'} $active={m === '线框'}>{m}</MenuTab>)}
      </MenuBar>

      <Ribbon>
        <Group $w={271} $ml={-8}>
          <ToolRow>
            <Tool w={44} icon="point" label="点" drop />
            <Tool w={42} icon="line" label="直线" drop />
            <Tool w={50} icon="arc" label="圆弧" drop />
            <Tool w={42} icon="rect" label="矩形" drop />
            <Tool w={44} icon="circle" label="圆" />
            <Tool w={42} icon="ellipse" label="椭圆" />
          </ToolRow>
          <Caption $ml={-2}>绘图</Caption>
        </Group>
        <Group $w={619} $pl={6}>
          <ToolRow>
            <Tool w={72} icon="spline" label="样条曲线" drop />
            <Tool w={80} icon="boundary" label="边界曲线" drop />
            <Tool w={42} icon="bridge" label="桥接" />
            <Tool w={50} icon="offset" label="偏移" drop />
            <Tool w={56} icon="helix" label="螺旋线" drop />
            <Tool w={62} icon="equation" label="方程式" />
            <Tool w={94} icon="section" label="2D剖面曲线" drop />
            <Tool w={76} icon="curves" label="曲线列表" />
            <Tool w={76} icon="wiretext" label="线框文字" />
          </ToolRow>
          <Caption $ml={-8}>曲线</Caption>
        </Group>
        <Group $w={269} $pl={4}>
          <ToolRow>
            <Tool w={46} icon="fillet" label="圆角" drop />
            <Tool w={46} icon="chamfer" label="倒角" drop />
            <Tool w={76} icon="trim" label="单击修剪" drop />
            <Tool w={46} icon="modify" label="修改" />
            <Tool w={46} icon="connect" label="连接" drop />
          </ToolRow>
          <Caption $ml={-24}>编辑曲线</Caption>
          <Launcher />
        </Group>
        <Group $w={327} $pl={4}>
          <ToolRow>
            <Tool w={88} icon="pattern" label="阵列几何体" drop />
            <Tool w={94} icon="mirror" label="镜像几何体" drop />
            <Tool w={42} icon="move" label="移动" />
            <Tool w={50} icon="copy" label="复制" />
            <Tool w={42} icon="scale" label="缩放" />
          </ToolRow>
          <Caption $ml={-6}>基础编辑</Caption>
        </Group>
      </Ribbon>

      <QuickBar>
        <Quick k="select" w={24} on />
        <Quick k="plus" /><Quick k="minus" /><Quick k="selrect" w={26} />
        <Drop $ml={4} /><Quick k="selcircle" ml={5} />
        <Sep $r={5} /><Quick k="filter" w={26} />
        <Combo $w={120} $ml={2}>全部<Drop /></Combo>
        <Quick k="part" w={27} on ml={2} />
        <Combo $w={158} $ml={2} $off>仅有零件<Drop $c="#b5b8bb" /></Combo>
        <Quick k="link" ml={6} /><Quick k="clock" />
        <Sep $l={5} $r={3} />
        <Quick k="stack" /><Quick k="stackc" /><Quick k="stackr" /><Quick k="stackr" />
        <Quick k="arrow" /><Quick k="list" /><Quick k="cubeRed" /><Quick k="globe" /><Quick k="gear" />
        <Sep $l={4} $r={3} />
        <Quick k="dial" /><Quick k="bracket" /><Quick k="sq" />
        <Combo $w={120} $ml={1} $off>法向<Drop $c="#b5b8bb" /></Combo>
        {['pick', 'gearg', 'play', 'pts', 'lineg', 'lineh', 'circd', 'circp', 'wave', 'wave2', 'arch', 'lineg', 'sheet', 'sheet'].map((k, i) => <Quick key={i} k={k} />)}
      </QuickBar>

      <Work>
        <Side>
          <SideHead>
            <SideTitle>螺旋线</SideTitle>
            <HeadIcon>
              <Svg $s={14} viewBox="0 0 14 14"><rect x="1" y="3" width="12" height="8" rx="1" fill="none" stroke="#9ca0a5" strokeWidth="1.4" /><path d="M4 7H10" stroke="#9ca0a5" strokeWidth="1.6" /></Svg>
            </HeadIcon>
            <HeadIcon>
              <Svg $s={15} viewBox="0 0 14 14"><path d="M2 2L12 12M12 2L2 12" stroke="#a8acb1" strokeWidth="3" /></Svg>
            </HeadIcon>
          </SideHead>
          <SideBody>
            <Strip>
              <StripCell $h={58} $on>
                <Svg $s={34} $ml={-15} viewBox="0 0 40 40">{ribbonIcons.helix}</Svg>
              </StripCell>
              <StripCell $h={60}>
                <Svg $s={32} viewBox="0 0 32 32">
                  <path d="M0 6L8 2V13L0 17Z" fill="#3aa2c9" /><path d="M8 14H18M0 24H9" stroke="#8b9095" strokeWidth="1.2" /><rect x="9" y="21" width="8" height="7" fill="#fff" stroke="#2b7a9b" strokeWidth="1.4" />
                </Svg>
              </StripCell>
              <StripCell $h={60}>
                <Svg $s={32} viewBox="0 0 32 32">
                  <rect x="0" y="5" width="11" height="7" fill="#3aa2c9" /><path d="M8 12V17M1 17H15" stroke="#777" strokeWidth="1" /><rect x="0" y="19" width="4" height="7" fill="#3aa2c9" /><rect x="7" y="19" width="11" height="7" fill="#eef3f6" stroke="#8bb4c8" />
                </Svg>
              </StripCell>
              <StripCell $h={60}>
                <Svg $s={30} $ml={-11} viewBox="0 0 30 30">
                  <rect x="1" y="1" width="28" height="28" fill="#fff" stroke="#3aa2c9" strokeWidth="2" /><rect x="1" y="1" width="28" height="5" fill="#3aa2c9" />
                  <path d="M7 13L15 9L23 13L15 18Z" fill="#fae083" /><path d="M7 13V20L15 25V18Z" fill="#f2c21c" /><path d="M23 13V20L15 25V18Z" fill="#dfa510" />
                </Svg>
              </StripCell>
              <StripCell $h={60}>
                <Svg $s={30} $ml={-9} viewBox="0 0 30 30">
                  <rect x="0" y="0" width="30" height="30" fill="#3aa2c9" /><circle cx="21" cy="7" r="5" fill="#f6c31f" /><path d="M0 22L8 11L15 18L22 13L30 22V30H0Z" fill="#7fd0e8" /><path d="M9 15L16 21L9 27Z" fill="#f28c1c" />
                </Svg>
              </StripCell>
              <StripCell $h={60}>
                <Svg $s={30} $ml={-9} viewBox="0 0 30 30">
                  <circle cx="20" cy="8" r="6" fill="#f6b21c" /><path d="M10 29C10 19 15 16 20 16S30 19 30 26L20 26Z" fill="#f6b21c" /><circle cx="9" cy="10" r="6" fill="#2b9ec6" /><path d="M0 29C0 20 4 17 9 17S18 21 18 29Z" fill="#2b9ec6" />
                </Svg>
              </StripCell>
            </Strip>

            <FormArea>
              <ActionRow>
                <SqButton $w={32} $ml={0}>
                  <Svg $s={24} viewBox="0 0 24 24"><path d="M2 13L6 9L10 13L19 4L23 8L10 21Z" fill="#2fd04a" stroke="#1a9a30" /></Svg>
                </SqButton>
                <SqButton $ml={3}>
                  <Svg $s={24} viewBox="0 0 24 24"><path d="M5 2L12 8L19 2L23 6L16 12L23 18L19 22L12 16L5 22L1 18L8 12L1 6Z" fill="#ec2a2a" stroke="#b81818" /></Svg>
                </SqButton>
                <SqButton $ml={3}>
                  <Svg $s={24} viewBox="0 0 24 24"><rect x="3" y="5" width="15" height="15" fill="none" stroke="#e02a2a" strokeWidth="3" /><path d="M7 12L11 16L21 5" fill="none" stroke="#2fc04a" strokeWidth="3.4" /></Svg>
                </SqButton>
                <SqButton $ml={307}>
                  <Svg $s={18} viewBox="0 0 18 18"><circle cx="9" cy="9" r="8" fill="#2a66c8" stroke="#b4c4de" strokeWidth="1.4" /><rect x="7.6" y="7.4" width="2.8" height="6.6" fill="#fff" /><rect x="7.6" y="3.6" width="2.8" height="2.6" fill="#fff" /></Svg>
                </SqButton>
                <SqButton $w={15} $ml={3}>
                  <Svg $s={18} viewBox="0 0 18 18"><path d="M4 2V15H12" fill="none" stroke="#2b9ec6" strokeWidth="1.6" /><path d="M7 2L12 7L7 12M10 2L15 7L10 12" fill="none" stroke="#f0a020" strokeWidth="1.6" /></Svg>
                </SqButton>
              </ActionRow>

              <Section $h={144} $mb={3}>
                <SectionHead><Tri />必选</SectionHead>
                <ModeRow>
                  <ModeBtn $w={34}>
                    <Svg $s={34} viewBox="0 0 34 34">
                      {[9, 13, 17, 21, 25].map(y => <ellipse key={y} cx="17" cy={y} rx="8" ry="3" fill="none" stroke="#3d8fae" strokeWidth="1.5" />)}
                      <path d="M17 3V32" stroke={R} strokeWidth="1.5" /><path d="M13.5 7L17 1L20.5 7Z" fill={R} />
                    </Svg>
                  </ModeBtn>
                  <ModeBtn $w={45} $ml={12} $on>
                    <Svg $s={42} viewBox="0 0 42 42">
                      {[8, 13, 18, 23, 28].map((x, i) => <ellipse key={x} cx={x} cy={14 + i * 2.4} rx="4" ry="8" transform={`rotate(30 ${x} ${14 + i * 2.4})`} fill="none" stroke="#3d8fae" strokeWidth="1.6" />)}
                      <path d="M2 22C8 12 16 16 22 22S34 32 40 22" fill="none" stroke="#c9202b" strokeWidth="1.8" />
                    </Svg>
                  </ModeBtn>
                </ModeRow>
                <FormRow $h={28}>
                  <RowLabel>路径</RowLabel>
                  <Input $w={187} $h={28} $focus><Selected>选中3个</Selected></Input>
                  <ActionIcon $w={28}>
                    <Svg $s={14} viewBox="0 0 14 14"><path d="M2 1L7 6L12 1M2 7L7 12L12 7" fill="none" stroke="#333" strokeWidth="1.5" /></Svg>
                  </ActionIcon>
                  <ActionIcon $w={28}>
                    <Svg $s={20} viewBox="0 0 20 20"><path d="M2 18L12 4" stroke="#2b9ec6" strokeWidth="2" /><path d="M16 2L14 9L9 4Z" fill="#2b9ec6" /><path d="M18 3L8 16" stroke={R} strokeWidth="2" /><path d="M5 18L7 11L12 15Z" fill={R} /></Svg>
                  </ActionIcon>
                  <ActionIcon $w={28}><DownIcon /></ActionIcon>
                  <Drop $ml={2} />
                </FormRow>
                <FormRow $mt={5}>
                  <RowLabel>起始角度</RowLabel>
                  <Input $w={242}>0<Grow /><Unit>deg</Unit><Spin /></Input>
                  <ValueActions gold />
                </FormRow>
              </Section>

              <Section $h={130} $mb={5}>
                <SectionHead><Tri />大小</SectionHead>
                <RadioRow>
                  <Radio $on /><RadioText $w={195}>半径</RadioText>
                  <Radio /><RadioText $w={40}>直径</RadioText>
                </RadioRow>
                <FieldBox $h={68} $pt={6}>
                  <FormRow $pl={11} $h={24}>
                    <RowLabel $w={139}>变化规律</RowLabel>
                    <Input $w={269} $h={24}>恒定<Grow /><Drop /></Input>
                  </FormRow>
                  <FormRow $pl={11} $mt={6}>
                    <RowLabel $w={139}>大小</RowLabel>
                    <Input $w={226}>10<Grow /><Unit>mm</Unit><Spin /></Input>
                    <ValueActions />
                  </FormRow>
                </FieldBox>
              </Section>

              <Section $h={216} $mb={4}>
                <SectionHead><Tri />长度</SectionHead>
                <FormRow $h={24} $mt={6}>
                  <RowLabel>长度类型</RowLabel>
                  <Input $w={285} $h={24}>螺距与圈数<Grow /><Drop /></Input>
                </FormRow>
                <FieldBox $h={78} $mt={15} $pt={16}>
                  <Legend>螺距</Legend>
                  <FormRow $pl={11} $h={24}>
                    <RowLabel $w={139}>变化规律</RowLabel>
                    <Input $w={269} $h={24}>恒定<Grow /><Drop /></Input>
                  </FormRow>
                  <FormRow $pl={11} $mt={6}>
                    <RowLabel $w={139}>螺距</RowLabel>
                    <Input $w={226}>10<Grow /><Spin /></Input>
                    <ValueActions />
                  </FormRow>
                </FieldBox>
                <FieldBox $h={47} $mt={13} $pt={16}>
                  <Legend>圈数</Legend>
                  <FormRow $pl={11}>
                    <RowLabel $w={139}>圈数</RowLabel>
                    <Input $w={226}>105<Grow /><Spin /></Input>
                    <ValueActions />
                  </FormRow>
                </FieldBox>
              </Section>

              <Section $h={148}>
                <SectionHead><Tri />设置</SectionHead>
                <CheckRow $mt={3}><Check />顺时针旋转</CheckRow>
                <CheckRow><Check />显示曲率梳</CheckRow>
                <FormRow $mt={4}>
                  <RowLabel>距离公差</RowLabel>
                  <Input $w={242}>0.01<Grow /><Spin /></Input>
                  <ValueActions />
                </FormRow>
                <FormRow $mt={6}>
                  <RowLabel>角度公差</RowLabel>
                  <Input $w={242}>0.05<Grow /><Spin /></Input>
                  <ValueActions />
                </FormRow>
              </Section>
            </FormArea>
          </SideBody>
        </Side>

        <Main>
          <TabBar>
            <DocTab $w={147}><TabText $ls={-0.3}>* 零件003.Z3PRT</TabText><XIcon /></DocTab>
            <DocTab $w={217} $pl={19} $on>
              <Svg $s={13} viewBox="0 0 12 12"><path d="M0 6H12M6 0V12" stroke="#7d6c3e" strokeWidth="2" /></Svg>
              <TabText $ml={5}>* 1231.Z3 - [零件001]</TabText>
              <XIcon />
            </DocTab>
            <DocTab $w={147} $ml={40}>DJR 06.Z3ASM<XIcon /></DocTab>
            <Svg $s={13} $ml={-4} viewBox="0 0 12 12"><path d="M0 6H12M6 0V12" stroke="#9a9ea2" strokeWidth="2" /></Svg>
          </TabBar>
          <View>
            <Scene />
            <ViewBar>
              <V k="back" /><V k="tree" ml={7} /><VDrop $ml={4} />
              <V k="eraser" ml={10} /><V k="cubeY" ml={6} /><V k="cubeB" ml={6} /><VDrop $ml={4} />
              <V k="cubeW" ml={8} /><VDrop $ml={4} />
              <V k="poly" ml={8} /><VDrop $ml={4} />
              <V k="frame" ml={8} /><VDrop $ml={4} />
              <V k="target" ml={8} /><VDrop $ml={4} />
              <V k="zoomfit" ml={8} /><V k="dim" ml={8} /><VDrop $ml={3} />
              <V k="monitor" ml={8} /><VDrop $ml={4} />
              <Swatch $c="#000" $h={10} /><Swatch $c="#bfe6f7" $h={22} />
              <V k="layers" ml={9} /><VDrop $ml={3} />
              <LayerBox>
                <Svg $s={16} viewBox="0 0 24 24">{viewIcons.bulb}</Svg>
                <Svg $s={16} viewBox="0 0 24 24">{viewIcons.ball}</Svg>
                <LayerText>图层</LayerText>
              </LayerBox>
            </ViewBar>
          </View>
        </Main>
      </Work>

      <Mark $x={514} $y={34} $w={56} $h={87} />
      <Mark $x={248} $y={278} $w={71} $h={55} />
      <Mark $x={171} $y={331} $w={87} $h={38} />
      <Mark $x={164} $y={565} $w={306} $h={182} />
      <Badge $x={601} $y={117}>1</Badge>
      <Badge $x={351} $y={294}>2</Badge>
      <Badge $x={297} $y={375}>3</Badge>
      <Badge $x={526} $y={711}>4</Badge>
    </Page>
  );
}
